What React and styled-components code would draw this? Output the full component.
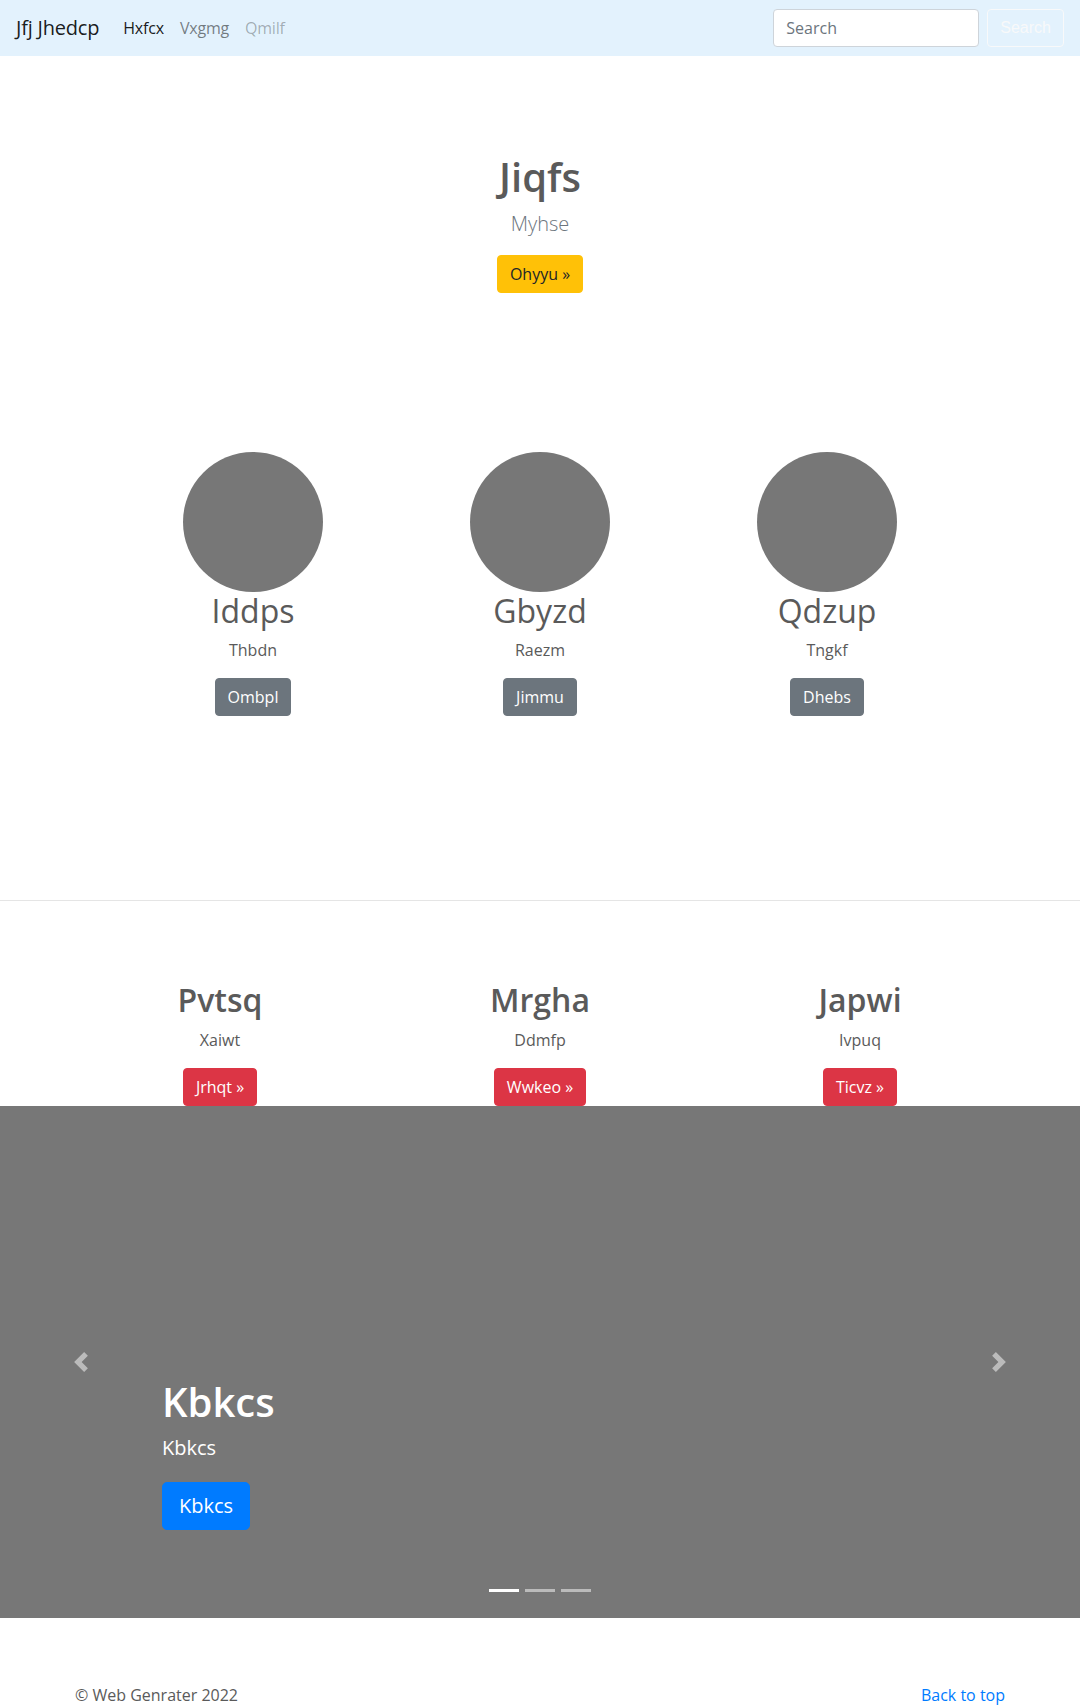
import React from "react";
import styled, { createGlobalStyle } from "styled-components";

const GlobalStyle = createGlobalStyle`
  * { box-sizing: border-box; }
  body {
    margin: 0;
    font-family: "Segoe UI", "Open Sans", "Noto Sans", Arial, sans-serif;
    font-size: 16px;
    line-height: 1.5;
    color: #5a5a5a;
    background: #fff;
  }
`;

const Navbar = styled.nav`
  display: flex;
  align-items: center;
  height: 56px;
  padding: 8px 16px;
  background: #e3f2fd;
`;

const Brand = styled.a`
  font-size: 20px;
  line-height: 1.5;
  color: rgba(0, 0, 0, 0.9);
  margin-right: 16px;
  text-decoration: none;
  letter-spacing: -0.2px;
`;

const NavLink = styled.a`
  padding: 8px;
  color: ${(p) => p.$color};
  text-decoration: none;
  letter-spacing: -0.2px;
`;

const SearchForm = styled.form`
  display: flex;
  margin-left: auto;
`;

const SearchInput = styled.input`
  width: 206px;
  height: 38px;
  padding: 6px 12px;
  margin-right: 8px;
  font: inherit;
  color: #495057;
  border: 1px solid #ced4da;
  border-radius: 4px;
  background: #fff;
  &::placeholder { color: #6c757d; }
`;

const Btn = styled.a`
  display: inline-block;
  padding: ${(p) => (p.$lg ? "8px 16px" : "6px 12px")};
  font-size: ${(p) => (p.$lg ? "20px" : "16px")};
  line-height: 1.5;
  border: 1px solid ${(p) => p.$border || p.$bg};
  border-radius: ${(p) => (p.$lg ? "5px" : "4px")};
  background: ${(p) => p.$bg};
  color: ${(p) => p.$fg};
  text-decoration: none;
  white-space: nowrap;
`;

const Hero = styled.section`
  text-align: center;
  padding: 97px 0 0;
`;

const HeroTitle = styled.h1`
  margin: 0 0 8px;
  font-size: 40px;
  font-weight: 600;
  line-height: 1.2;
`;

const Lead = styled.p`
  margin: 0 0 16px;
  font-size: 20px;
  font-weight: 300;
  color: #6c757d;
`;

const Marketing = styled.section`
  display: grid;
  grid-template-columns: repeat(3, ${(p) => p.$col}px);
  justify-content: center;
  padding-top: ${(p) => p.$top}px;
`;

const Col = styled.div`
  display: flex;
  flex-direction: column;
  align-items: center;
  text-align: center;
`;

const Circle = styled.div`
  width: 140px;
  height: 140px;
  border-radius: 50%;
  background: #777;
`;

const ColTitle = styled.h2`
  margin: 0 0 8px;
  font-size: 32px;
  font-weight: ${(p) => p.$weight};
  line-height: 1.2;
`;

const ColText = styled.p`
  margin: 0 0 16px;
`;

const Divider = styled.hr`
  margin: 184px 0 0;
  border: 0;
  border-top: 1px solid rgba(0, 0, 0, 0.1);
`;

const Carousel = styled.div`
  position: relative;
  height: 512px;
  background: #777;
`;

const Control = styled.a`
  position: absolute;
  top: 0;
  bottom: 0;
  ${(p) => (p.$side === "left" ? "left: 0;" : "right: 0;")}
  width: 15%;
  display: flex;
  align-items: center;
  justify-content: center;
  opacity: 0.5;
`;

const Caption = styled.div`
  position: absolute;
  left: 15%;
  right: 15%;
  bottom: 48px;
  padding: 20px 0;
  color: #fff;
`;

const CaptionTitle = styled.h1`
  margin: 0 0 8px;
  font-size: 40px;
  font-weight: 600;
  line-height: 1.2;
`;

const CaptionText = styled.p`
  margin: 0 0 20px;
  font-size: 20px;
  line-height: 1.4;
`;

const CaptionAction = styled.div`
  margin-bottom: 20px;
`;

const Indicators = styled.ol`
  position: absolute;
  left: 0;
  right: 0;
  bottom: 26px;
  display: flex;
  justify-content: center;
  margin: 0;
  padding: 0;
  list-style: none;
`;

const Indicator = styled.li`
  width: 30px;
  height: 3px;
  margin: 0 3px;
  background: #fff;
  opacity: ${(p) => (p.$active ? 1 : 0.5)};
`;

const Footer = styled.footer`
  display: flex;
  justify-content: space-between;
  max-width: 960px;
  margin: 0 auto;
  padding: 65px 15px 48px;
  p { margin: 0 0 16px; }
  a { color: #007bff; text-decoration: none; }
`;

const Chevron = ({ dir }) => (
  <svg width="20" height="20" viewBox="0 0 8 8" fill="#fff">
    {dir === "left" ? (
      <path d="M5.25 0l-4 4 4 4 1.5-1.5L4.25 4l2.5-2.5L5.25 0z" />
    ) : (
      <path d="M2.75 0l-1.5 1.5L3.75 4l-2.5 2.5L2.75 8l4-4-4-4z" />
    )}
  </svg>
);

const people = [
  { name: "Iddps", text: "Thbdn", btn: "Ombpl" },
  { name: "Gbyzd", text: "Raezm", btn: "Jimmu" },
  { name: "Qdzup", text: "Tngkf", btn: "Dhebs" },
];

const features = [
  { name: "Pvtsq", text: "Xaiwt", btn: "Jrhqt »" },
  { name: "Mrgha", text: "Ddmfp", btn: "Wwkeo »" },
  { name: "Japwi", text: "Ivpuq", btn: "Ticvz »" },
];

const App = () => {
  return (
    <>
      <GlobalStyle />
      <Navbar>
        <Brand href="#">Jfj Jhedcp</Brand>
        <NavLink href="#" $color="rgba(0,0,0,.9)">Hxfcx</NavLink>
        <NavLink href="#" $color="rgba(0,0,0,.5)">Vxgmg</NavLink>
        <NavLink href="#" $color="rgba(0,0,0,.3)">Qmilf</NavLink>
        <SearchForm onSubmit={(e) => e.preventDefault()}>
          <SearchInput type="search" placeholder="Search" />
          <Btn as="button" $bg="transparent" $border="#f8f9fa" $fg="#f8f9fa">Search</Btn>
        </SearchForm>
      </Navbar>

      <Hero>
        <HeroTitle>Jiqfs</HeroTitle>
        <Lead>Myhse</Lead>
        <Btn href="#" $bg="#ffc107" $fg="#212529">Ohyyu »</Btn>
      </Hero>

      <Marketing $col={287} $top={159}>
        {people.map((p) => (
          <Col key={p.name}>
            <Circle />
            <ColTitle $weight={400}>{p.name}</ColTitle>
            <ColText>{p.text}</ColText>
            <Btn href="#" $bg="#6c757d" $fg="#fff">{p.btn}</Btn>
          </Col>
        ))}
      </Marketing>

      <Divider />

      <Marketing $col={320} $top={80}>
        {features.map((f) => (
          <Col key={f.name}>
            <ColTitle $weight={600}>{f.name}</ColTitle>
            <ColText>{f.text}</ColText>
            <Btn href="#" $bg="#dc3545" $fg="#fff">{f.btn}</Btn>
          </Col>
        ))}
      </Marketing>

      <Carousel>
        <Control href="#" $side="left"><Chevron dir="left" /></Control>
        <Control href="#" $side="right"><Chevron dir="right" /></Control>
        <Caption>
          <CaptionTitle>Kbkcs</CaptionTitle>
          <CaptionText>Kbkcs</CaptionText>
          <CaptionAction>
            <Btn href="#" $lg $bg="#007bff" $fg="#fff">Kbkcs</Btn>
          </CaptionAction>
        </Caption>
        <Indicators>
          <Indicator $active />
          <Indicator />
          <Indicator />
        </Indicators>
      </Carousel>

      <Footer>
        <p>© Web Genrater 2022</p>
        <p><a href="#">Back to top</a></p>
      </Footer>
    </>
  );
};

export default App;
